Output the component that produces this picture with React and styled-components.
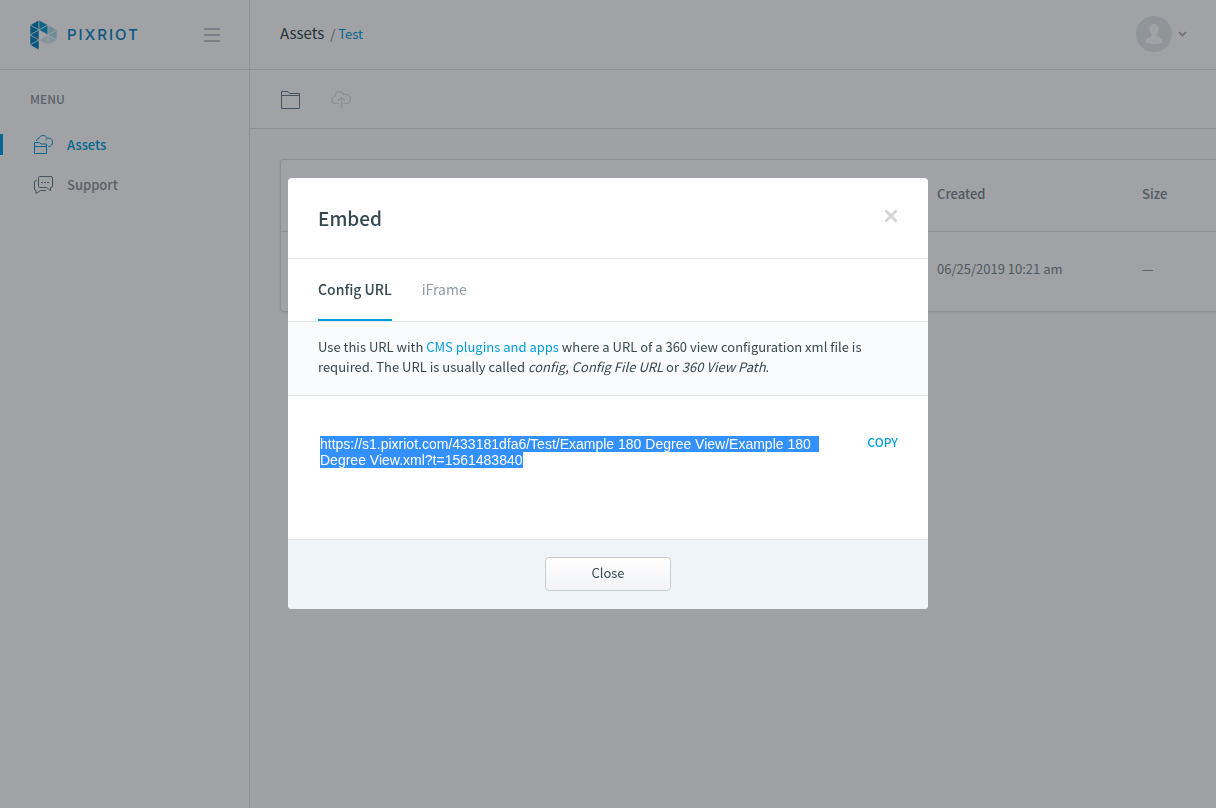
import React, { useEffect, useRef, useState } from "react";
import styled, { createGlobalStyle } from "styled-components";

const GlobalStyle = createGlobalStyle`
  * {
    box-sizing: border-box;
  }

  body {
    margin: 0;
    background: #fcfdfe;
    color: #364850;
    font-family: "Source Sans Pro", "Noto Sans CJK SC", "Noto Sans", sans-serif;
    font-size: 13px;
    line-height: 20px;
  }

  a {
    color: #009ddc;
    text-decoration: none;
  }

  button {
    padding: 0;
    border: 0;
    background: none;
    color: inherit;
    font: inherit;
    cursor: pointer;
  }
`;

const Page = styled.div`
  display: flex;
  min-height: 100vh;
`;

const Sidebar = styled.aside`
  flex: none;
  width: 250px;
  background: #fff;
  border-right: 1px solid #dcdfe6;
`;

const SidebarHeader = styled.div`
  display: flex;
  align-items: center;
  justify-content: space-between;
  height: 70px;
  padding: 0 29px;
  border-bottom: 1px solid #dcdfe6;
`;

const Logo = styled.a`
  display: flex;
  align-items: center;
  gap: 10px;
  color: #0083c4;
  font-family: Inter, "Noto Sans", sans-serif;
  font-size: 15px;
  font-weight: 500;
  letter-spacing: 2px;
`;

const MenuTitle = styled.h2`
  margin: 0;
  padding: 19px 30px 25px;
  color: #8a969c;
  font-size: 12px;
  font-weight: 500;
  line-height: 20px;
`;

const MenuLink = styled.a`
  display: flex;
  align-items: center;
  gap: 13px;
  height: 21px;
  margin-bottom: 19px;
  padding-left: ${({ $active }) => ($active ? "30px" : "33px")};
  border-left: ${({ $active }) => ($active ? "3px solid #009ddc" : "0")};
  color: ${({ $active }) => ($active ? "#009ddc" : "#8a9296")};
  font-weight: 500;
`;

const Content = styled.main`
  flex: 1;
  min-width: 0;
`;

const TopBar = styled.header`
  display: flex;
  align-items: center;
  justify-content: space-between;
  height: 70px;
  padding: 0 29px 2px 30px;
  background: #fff;
  border-bottom: 1px solid #dcdfe6;
`;

const Breadcrumb = styled.nav`
  display: flex;
  align-items: baseline;
  gap: 6px;
  font-size: 13px;
`;

const Root = styled.a`
  color: #364850;
  font-size: 15px;
`;

const Current = styled.span`
  color: #6e7b82;
`;

const UserButton = styled.button`
  display: flex;
  align-items: center;
  gap: 6px;
`;

const Toolbar = styled.div`
  display: flex;
  align-items: center;
  gap: 30px;
  height: 59px;
  padding: 2px 30px 0;
  background: #fff;
  border-bottom: 1px solid #dcdfe6;
`;

const ToolButton = styled.button`
  display: flex;
  color: #627e88;

  &:disabled {
    color: #dcdfe2;
    cursor: default;
  }
`;

const Card = styled.section`
  margin: 30px 0 30px 30px;
  background: #fff;
  border: 1px solid #dce1e6;
  border-right: 0;
  border-radius: 4px 0 0 4px;
  box-shadow: 0 1px 3px rgba(40, 60, 80, 0.1);
`;

const Table = styled.table`
  width: 100%;
  table-layout: fixed;
  border-collapse: collapse;
  color: #78868e;
`;

const Th = styled.th`
  width: ${({ $width }) => $width || "auto"};
  height: 71px;
  padding: 0 0 2px;
  border-bottom: 1px solid #dce1e6;
  font-weight: 500;
  text-align: left;
`;

const Td = styled.td`
  height: 80px;
  padding: 0 0 4px;
`;

const Overlay = styled.div`
  position: fixed;
  inset: 0;
  display: flex;
  align-items: flex-start;
  justify-content: center;
  padding: 178px 20px 20px;
  overflow: auto;
  background: rgba(20, 23, 30, 0.4);
`;

const Dialog = styled.div`
  width: 100%;
  max-width: 640px;
  overflow: hidden;
  background: #fff;
  border-radius: 4px;
`;

const DialogHeader = styled.div`
  display: flex;
  align-items: flex-start;
  justify-content: space-between;
  padding: 26px 30px;
  border-bottom: 1px solid #e2e6ec;
`;

const DialogTitle = styled.h1`
  margin: 0;
  font-size: 19px;
  font-weight: 500;
  line-height: 28px;
`;

const IconButton = styled.button`
  display: flex;
  padding-top: 5px;
  color: #d3d6d9;
`;

const Tabs = styled.div`
  display: flex;
  gap: 30px;
  height: 63px;
  padding: 0 30px;
  border-bottom: 1px solid #e2e6ec;
`;

const Tab = styled.button`
  border-bottom: 2px solid
    ${({ $active }) => ($active ? "#009ddc" : "transparent")};
  color: ${({ $active }) => ($active ? "#364850" : "#8e9ba3")};
  font-size: 14px;
  font-weight: ${({ $active }) => ($active ? 500 : 400)};
`;

const Hint = styled.p`
  margin: 0;
  padding: 15px 30px 18px;
  background: #fafbfd;
  border-bottom: 1px solid #e2e6ec;
`;

const DialogBody = styled.div`
  display: flex;
  align-items: flex-start;
  justify-content: space-between;
  gap: 28px;
  padding: 36px 30px 37px;
`;

const UrlField = styled.textarea`
  flex: 1;
  height: 70px;
  padding: 4px 2px;
  border: 0;
  outline: 0;
  resize: none;
  background: transparent;
  color: #364850;
  font-family: "Liberation Sans", Arial, sans-serif;
  font-size: 14px;
  line-height: 16px;

  &::selection {
    background: #3390ff;
    color: #fff;
  }
`;

const CopyButton = styled.button`
  color: #009ddc;
  font-size: 12px;
  font-weight: 500;
`;

const DialogFooter = styled.div`
  display: flex;
  justify-content: center;
  padding: 17px 30px 18px;
  background: #eff4f8;
  border-top: 1px solid #e2e6ec;
`;

const CloseButton = styled.button`
  width: 126px;
  height: 34px;
  padding-bottom: 2px;
  border: 1px solid #c9ced5;
  border-radius: 4px;
  background: linear-gradient(#fff, #f2f3f7);
`;

const LogoMark = () => (
  <svg width="28" height="32" viewBox="-1 -1 28 32" stroke="#fff" strokeWidth="0.6" aria-hidden="true">
    <g fill="#0080bd">
      <path d="M0 5 9 0V10Z" />
      <path d="M0 5V15L9 10Z" />
      <path d="M0 15 9 10V20Z" />
      <path d="M0 15V25L9 20Z" />
      <path d="M0 25 9 20V30Z" />
    </g>
    <g fill="#0e9ccc">
      <path d="M9 0V10L18 5Z" />
      <path d="M9 10 18 5V15Z" />
    </g>
    <g fill="#a9d9ec">
      <path d="M18 5V15L27 10Z" />
      <path d="M18 15 27 10V20Z" />
    </g>
    <g fill="#cbe6ef">
      <path d="M9 20 18 15V25Z" />
      <path d="M18 15V25L27 20Z" />
    </g>
  </svg>
);

const AssetsIcon = () => (
  <svg width="21" height="20" viewBox="0 0 21 20" fill="none" stroke="currentColor" aria-hidden="true">
    <path d="M1.500 18.500V7.500H6.500L8 9H13.500V18.500ZM1.500 11.500H13.500" />
    <path d="M3.500 6C3.500 4.500 4.300 3.800 5.600 3.800 6.300 1.500 8 .5 9.800.5 12 .5 13.800 1.600 14.300 3.500 17.500 2.300 19.500 4.500 19.500 7 19.500 9.700 18 11.500 15.500 11.500M14.300 3.500C13.500 3.800 13 4.500 12.800 5.500" />
  </svg>
);

const SupportIcon = () => (
  <svg width="21" height="20" viewBox="0 0 21 20" fill="none" stroke="#627e88" aria-hidden="true">
    <path d="M6.500 1.500H18Q19.500 1.500 19.500 3V11Q19.500 12.500 18 12.500H17.500V15.500L13.500 12.500H6.500Q5.500 12.500 5.500 11V3Q5.500 1.500 6.500 1.500Z" />
    <path d="M3.500 5.500H3Q1.500 5.500 1.500 7V14Q1.500 15.500 3 15.500V18.500L7.500 15.500H13" />
    <path d="M8 7.500H17" strokeDasharray="2 1" />
  </svg>
);

const FolderIcon = () => (
  <svg width="21" height="20" viewBox="0 0 21 20" fill="none" stroke="currentColor" aria-hidden="true">
    <path d="M1.500 18.500V1.500H8L9.500 3.500H19.500V18.500ZM1.500 5.500H19.500" />
  </svg>
);

const UploadIcon = () => (
  <svg width="21" height="20" viewBox="0 0 21 20" fill="none" stroke="currentColor" strokeWidth="1.2" aria-hidden="true">
    <path d="M8 13.500H4.500C2.500 13.500 1 12 1 10 1 8 2.300 6.700 4 6.500 4.200 3.500 6 1.600 8.500 1.600 10.700 1.600 12.300 2.800 13 4.700 16.500 3.500 19.400 6 19.400 9.200 19.400 11.800 17.500 13.500 15 13.500H12.500M13 4.700 12 5.300" />
    <path d="M10.500 18V7.500M7 10.500 10.500 7.200 14 10.500" />
  </svg>
);

const AvatarIcon = () => (
  <svg width="36" height="36" viewBox="0 0 36 36" aria-hidden="true">
    <circle cx="18" cy="18" r="18" fill="#e3e9ec" />
    <path
      fill="#fff"
      d="M18 8C21 8 22.600 10.200 22.500 13.300 22.400 15.500 21.500 17.300 20.300 18.500V20.300C23.500 21.500 26 22.500 26.300 25 26.500 27 24.500 28 18 28S9.500 27 9.700 25C10 22.500 12.500 21.500 15.700 20.300V18.500C14.500 17.300 13.600 15.500 13.500 13.300 13.400 10.200 15 8 18 8Z"
    />
  </svg>
);

const EMBED_URL =
  "https://s1.pixriot.com/433181dfa6/Test/Example 180 Degree View/Example 180 Degree View.xml?t=1561483840";

const EmbedDialog = ({ onClose }) => {
  const [tab, setTab] = useState("config");
  const urlRef = useRef(null);

  // The URL is ready to be copied as soon as the dialog opens
  useEffect(() => {
    urlRef.current.focus();
    urlRef.current.select();
  }, []);

  const handleCopy = () => {
    urlRef.current.select();
    navigator.clipboard?.writeText(EMBED_URL);
  };

  return (
    <Overlay>
      <Dialog role="dialog" aria-modal="true" aria-labelledby="embed-title">
        <DialogHeader>
          <DialogTitle id="embed-title">Embed</DialogTitle>
          <IconButton type="button" aria-label="Close dialog" onClick={onClose}>
            <svg width="14" height="14" viewBox="0 0 14 14" stroke="currentColor" strokeWidth="3">
              <path d="M1.500 1.500 12.500 12.500M12.500 1.500 1.500 12.500" />
            </svg>
          </IconButton>
        </DialogHeader>
        <Tabs role="tablist">
          <Tab
            type="button"
            role="tab"
            aria-selected={tab === "config"}
            $active={tab === "config"}
            onClick={() => setTab("config")}
          >
            Config URL
          </Tab>
          <Tab
            type="button"
            role="tab"
            aria-selected={tab === "iframe"}
            $active={tab === "iframe"}
            onClick={() => setTab("iframe")}
          >
            iFrame
          </Tab>
        </Tabs>
        <Hint>
          Use this URL with <a href="#plugins">CMS plugins and apps</a> where a
          URL of a 360 view configuration xml file is required. The URL is
          usually called <em>config</em>, <em>Config File URL</em> or{" "}
          <em>360 View Path</em>.
        </Hint>
        <DialogBody>
          <UrlField
            ref={urlRef}
            aria-label="Config URL"
            readOnly
            spellCheck={false}
            value={EMBED_URL}
          />
          <CopyButton type="button" onClick={handleCopy}>
            COPY
          </CopyButton>
        </DialogBody>
        <DialogFooter>
          <CloseButton type="button" onClick={onClose}>
            Close
          </CloseButton>
        </DialogFooter>
      </Dialog>
    </Overlay>
  );
};

const App = () => {
  const [open, setOpen] = useState(true);

  return (
    <>
      <GlobalStyle />
      <Page>
        <Sidebar>
          <SidebarHeader>
            <Logo href="#home">
              <LogoMark />
              PIXRIOT
            </Logo>
            <ToolButton type="button" aria-label="Toggle menu">
              <svg width="16" height="14" viewBox="0 0 16 14" stroke="#c4c5d0" strokeWidth="2">
                <path d="M0 1H16M0 7H16M0 13H16" />
              </svg>
            </ToolButton>
          </SidebarHeader>
          <MenuTitle>MENU</MenuTitle>
          <nav>
            <MenuLink href="#assets" $active>
              <AssetsIcon />
              Assets
            </MenuLink>
            <MenuLink href="#support">
              <SupportIcon />
              Support
            </MenuLink>
          </nav>
        </Sidebar>
        <Content>
          <TopBar>
            <Breadcrumb aria-label="Breadcrumb">
              <Root href="#assets">Assets</Root>
              <Current>
                / <a href="#test">Test</a>
              </Current>
            </Breadcrumb>
            <UserButton type="button" aria-label="Account">
              <AvatarIcon />
              <svg width="9" height="6" viewBox="0 0 9 6" fill="none" stroke="#a2a2ac" strokeWidth="1.6">
                <path d="M1 1 4.500 4.500 8 1" />
              </svg>
            </UserButton>
          </TopBar>
          <Toolbar>
            <ToolButton type="button" aria-label="New folder">
              <FolderIcon />
            </ToolButton>
            <ToolButton type="button" aria-label="Upload" disabled>
              <UploadIcon />
            </ToolButton>
          </Toolbar>
          <Card>
            <Table>
              <thead>
                <tr>
                  <Th />
                  <Th $width="205px">Created</Th>
                  <Th $width="74px">Size</Th>
                </tr>
              </thead>
              <tbody>
                <tr>
                  <Td />
                  <Td>06/25/2019 10:21 am</Td>
                  <Td>—</Td>
                </tr>
              </tbody>
            </Table>
          </Card>
        </Content>
      </Page>
      {open && <EmbedDialog onClose={() => setOpen(false)} />}
    </>
  );
};

export default App;
